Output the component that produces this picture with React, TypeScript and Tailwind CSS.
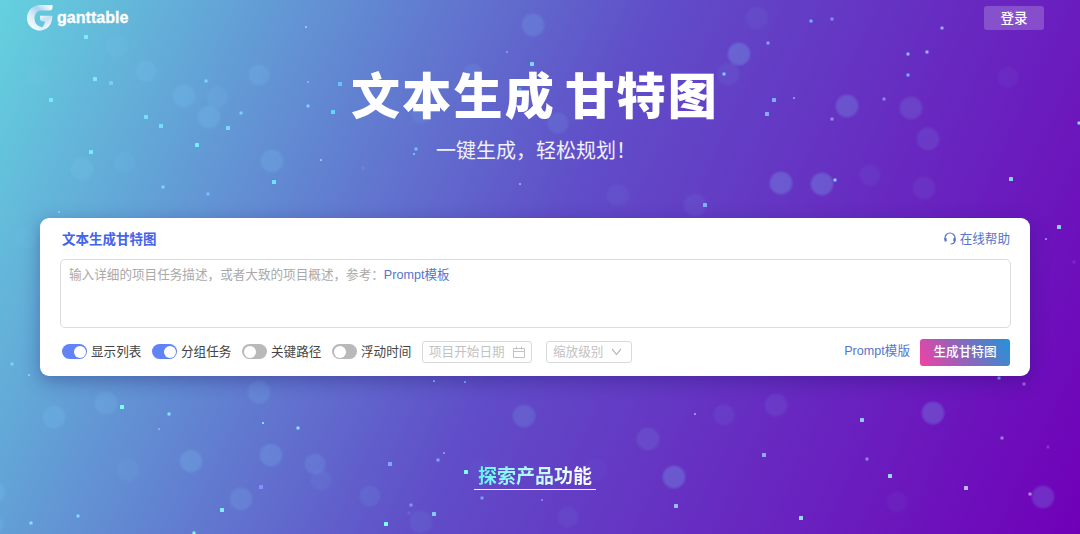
import React from "react";

// [x, y, radius, opacity]
const bubbles = [
  [117, 46, 12, 0.12], [146, 71, 11, 0.18], [37, 76, 11, 0.1], [184, 96, 12, 0.2], [217, 97, 11, 0.12],
  [209, 117, 12, 0.2], [259, 75, 11, 0.18], [82, 169, 12, 0.18], [125, 162, 11, 0.1], [272, 161, 12, 0.2],
  [533, 25, 12, 0.18], [473, 73, 10, 0.1], [421, 114, 10, 0.1], [558, 123, 11, 0.12], [739, 54, 12, 0.25],
  [757, 18, 12, 0.06], [728, 74, 12, 0.07], [781, 183, 12, 0.25], [822, 184, 12, 0.25], [847, 106, 12, 0.22],
  [911, 108, 12, 0.15], [928, 139, 12, 0.12], [870, 175, 11, 0.06], [924, 188, 12, 0.08], [1008, 77, 11, 0.05],
  [618, 195, 12, 0.06], [695, 205, 12, 0.08], [54, 417, 12, 0.2], [106, 403, 12, 0.17], [128, 470, 12, 0.08],
  [191, 461, 12, 0.22], [259, 392, 12, 0.16], [241, 499, 12, 0.17], [271, 455, 12, 0.2], [315, 464, 11, 0.15],
  [321, 480, 11, 0.07], [370, 496, 11, 0.1], [421, 522, 12, 0.08], [524, 416, 12, 0.17], [648, 439, 12, 0.13],
  [674, 477, 12, 0.25], [724, 415, 11, 0.08], [776, 405, 12, 0.1], [933, 413, 12, 0.24], [897, 502, 11, 0.05],
  [1043, 497, 12, 0.2], [568, 517, 11, 0.06], [596, 470, 12, 0.03], [480, 470, 12, 0.03], [-5, 492, 11, 0.2],
  [-6, 525, 10, 0.17], [26, 238, 11, 0.1],
];

// [x, y, size, color]
const sparks: [number, number, number, string][] = [
  [86, 37, 4, "#7feaff"], [95, 79, 4, "#77ecff"], [111, 83, 4, "#7cc9f6"], [51, 100, 4, "#75eaff"],
  [146, 117, 4, "#75dfff"], [161, 126, 4, "#75dcff"], [206, 81, 3, "#7ed1ff"], [241, 113, 3, "#7ccfff"],
  [228, 128, 4, "#7ad7ff"], [197, 145, 4, "#75edff"], [91, 152, 4, "#75eaff"], [163, 187, 3, "#79d6ff"],
  [208, 194, 3, "#7abfff"], [306, 27, 2, "#9cc6ff"], [308, 82, 2, "#8fb0ec"], [340, 84, 4, "#65c3fb"],
  [308, 106, 3, "#76d5ff"], [333, 112, 4, "#5ed8ff"], [416, 149, 3, "#75bfff"], [414, 154, 2, "#83bcff"],
  [321, 160, 2, "#9dc4ff"], [274, 182, 4, "#6be4ff"], [363, 168, 3, "#777ddd"], [520, 184, 2, "#a5a1f5"],
  [507, 52, 2, "#9096ef"], [532, 64, 4, "#78d6ff"], [520, 89, 3, "#519fee"], [768, 43, 3, "#82a5f5"],
  [724, 74, 3, "#7fc9ff"], [774, 100, 4, "#7eacff"], [794, 98, 2, "#929be7"], [767, 114, 4, "#88aaff"],
  [705, 205, 4, "#7cb2ff"], [811, 21, 3, "#70b9ff"], [832, 19, 3, "#858dee"], [942, 28, 3, "#91adff"],
  [927, 52, 3, "#98b4ff"], [908, 54, 3, "#8eb7ff"], [908, 75, 3, "#7ab0ff"], [884, 99, 3, "#8e86f0"],
  [832, 119, 3, "#978de5"], [835, 180, 3, "#7fd2f8"], [1011, 179, 4, "#86d5ff"], [1079, 123, 3, "#8bd8ff"],
  [1059, 227, 4, "#87d4fc"], [1046, 239, 2, "#9d8af1"], [1074, 262, 3, "#8424c0"], [12, 364, 3, "#72d5fb"],
  [29, 375, 2, "#86d4ff"], [59, 212, 2, "#86d4ff"], [122, 407, 4, "#7dffed"], [169, 414, 3, "#7de7ff"],
  [159, 429, 2, "#8bb0f2"], [263, 423, 2, "#86e7ff"], [78, 516, 3, "#80dcff"], [31, 523, 3, "#8addff"],
  [222, 510, 4, "#7defff"], [194, 533, 3, "#7bffdc"], [261, 487, 4, "#8c8cff"], [298, 428, 3, "#8ae6ff"],
  [434, 381, 2, "#73c0f5"], [465, 382, 2, "#72b6f3"], [390, 464, 4, "#7fa9ff"], [438, 460, 3, "#86a3ff"],
  [444, 453, 2, "#9392f0"], [466, 472, 4, "#78ffff"], [411, 505, 3, "#878eff"], [409, 513, 3, "#775bd4"],
  [434, 514, 4, "#80ccff"], [386, 524, 4, "#7dffe9"], [482, 498, 3, "#7c9df6"], [542, 500, 2, "#8586e2"],
  [695, 414, 2, "#a595ee"], [764, 455, 4, "#91a6fc"], [676, 506, 4, "#94c0ff"], [801, 518, 4, "#97dcff"],
  [862, 420, 4, "#91c9ff"], [867, 459, 3, "#9b81e9"], [890, 476, 4, "#9bd8ff"], [966, 488, 4, "#c1b7ff"],
  [1002, 438, 3, "#a079dd"], [1030, 494, 3, "#b587e7"], [1048, 447, 3, "#8b2ccc"], [999, 378, 3, "#79a9df"],
  [1024, 384, 3, "#a563e0"],
];

const Backdrop = () => (
  <svg className="absolute inset-0 h-full w-full" viewBox="0 0 1080 534" aria-hidden="true">
    <defs>
      <radialGradient id="bubble">
        <stop offset="0.75" stopColor="#7cc8f4" />
        <stop offset="1" stopColor="#7cc8f4" stopOpacity="0.15" />
      </radialGradient>
    </defs>
    {bubbles.map(([x, y, r, o], i) => (
      <circle key={i} cx={x} cy={y} r={r + 0.5} fill="url(#bubble)" opacity={o} />
    ))}
    {sparks.map(([x, y, s, c], i) => (
      <rect key={i} x={x - s / 2} y={y - s / 2} width={s} height={s} rx="0.6" fill={c} />
    ))}
  </svg>
);

const Logo = () => (
  <div className="flex items-center gap-1">
    <svg width="26" height="26" viewBox="0 0 26 26">
      <defs>
        <linearGradient id="arc" x1="1" y1="0.1" x2="0.2" y2="1">
          <stop offset="0" stopColor="#fff" />
          <stop offset="0.35" stopColor="#a9d3ef" />
          <stop offset="0.6" stopColor="#d5e9f8" />
          <stop offset="1" stopColor="#fff" />
        </linearGradient>
        <linearGradient id="hook" x1="0" y1="0" x2="0.6" y2="1">
          <stop offset="0" stopColor="#fff" />
          <stop offset="0.4" stopColor="#c6def4" />
          <stop offset="1" stopColor="#fff" />
        </linearGradient>
      </defs>
      <path d="M25.500 0v2.500Q25.500 5.500 22.500 5.500H15C10 5.500 7.500 9 7.500 13.500c0 5 3.500 8 7.500 8.500-.5 2.500-2.500 3.700-5 3.200C4 23.500 0 19 0 13.200 0 5.500 5.500 0 13.500 0Z" fill="url(#arc)" />
      <path d="M13 10.700h12.300c.3 8.500-4.500 15-14.800 15 4-1.500 7-5 7.500-9.200H16.500q-3.500 0-3.500-3Z" fill="url(#hook)" />
    </svg>
    <span className="font-['Liberation_Sans',sans-serif] text-[16px] leading-6 font-bold tracking-[0.05px] text-white [-webkit-text-stroke:0.3px_white]">ganttable</span>
  </div>
);

const Toggle = ({ label, on }: { label: string; on?: boolean }) => (
  <div className="flex w-[90px] items-center gap-1">
    <span className={`flex h-[15px] w-[25px] shrink-0 items-center rounded-full p-[1.5px] ${on ? "justify-end bg-[#6183f5]" : "bg-[#b9b9b9]"}`}>
      <span className="h-3 w-3 rounded-full bg-white" />
    </span>
    <span className="pb-px text-[12.6px] whitespace-nowrap text-[#444]">{label}</span>
  </div>
);

const HeadsetIcon = () => (
  <svg width="12" height="13" viewBox="0 0 12 13" fill="none" stroke="#5874ca" strokeWidth="1.2">
    <path d="M1 8V6a5 5 0 0 1 10 0v2c0 2.500-1.500 4-4.500 4" />
    <path d="M1.200 6v3.500M2 6.300v3M10.800 6v3.500M10 6.300v3" strokeWidth="1.4" />
  </svg>
);

const CalendarIcon = () => (
  <svg width="12" height="12" viewBox="0 0 12 12" fill="none" stroke="#c2c2c2">
    <path d="M.5 2.500h11v9H.5zM.5 5.500h11M3.500.5v3M8.500.5v3" />
  </svg>
);

const App = () => {
  return (
    <div className="relative h-[534px] w-[1080px] overflow-hidden bg-[linear-gradient(115deg,#64d1de_0%,#604dc8_50%,#7000b8_100%)] font-['Noto_Sans_CJK_SC',sans-serif]">
      <Backdrop />
      <div className="relative flex h-full flex-col">
        <header className="flex h-9 w-full items-center justify-between pr-9 pl-[27px]">
          <Logo />
          <button className="h-6 w-[60px] rounded-[3px] bg-white/20 pb-0.5 text-[13.5px] leading-[22px] font-medium text-white">登录</button>
        </header>
        <main className="flex w-[1070px] flex-col items-center">
          <h1 className="mt-[21px] h-[72px] text-[49px] leading-[72px] font-black tracking-[2.3px] whitespace-pre text-white [word-spacing:-4.5px]">文本生成 甘特图</h1>
          <p className="mt-[5px] ml-0.5 h-8 text-[20px] leading-8 text-[#f1f0fb]">一键生成，轻松规划！</p>

          <section className="mt-[52px] flex h-[158px] w-[990px] flex-col rounded-[9px] bg-white px-5 shadow-[0_5px_18px_rgba(30,20,100,0.35)]">
            <div className="flex h-[41px] items-center justify-between pl-0.5">
              <h2 className="text-[13.5px] font-bold text-[#4263eb]">文本生成甘特图</h2>
              <a className="flex items-center gap-1 text-[12.6px] text-[#5874ca]">
                <HeadsetIcon />
                在线帮助
              </a>
            </div>
            <div className="h-[69px] w-[951px] rounded-[5px] border border-[#dcdcdc] px-2 py-[3px] text-[12.6px] leading-[22px] text-[#a9a9a9]">
              输入详细的项目任务描述，或者大致的项目概述，参考：
              <a className="font-['Liberation_Sans','Noto_Sans_CJK_SC',sans-serif] text-[#5874ca]">Prompt模板</a>
            </div>
            <div className="flex h-12 items-center pl-0.5">
              <Toggle label="显示列表" on />
              <Toggle label="分组任务" on />
              <Toggle label="关键路径" />
              <Toggle label="浮动时间" />
              <div className="flex h-[22px] w-[110px] items-center justify-between rounded-[3px] border border-[#d9d9d9] px-1.5 text-[12.6px] text-[#c2c2c2]">
                <span className="pb-px">项目开始日期</span>
                <CalendarIcon />
              </div>
              <div className="ml-[14px] flex h-[22px] w-[86px] items-center justify-between rounded-[3px] border border-[#d9d9d9] pr-[9px] pl-1.5 text-[12.6px] text-[#c2c2c2]">
                <span className="pb-px">缩放级别</span>
                <svg width="11" height="8" viewBox="0 0 11 8" fill="none" stroke="#b5b5b5" strokeWidth="1.1">
                  <path d="m1 .8 4.500 5.900L10 .8" />
                </svg>
              </div>
              <a className="ml-auto pb-px font-['Liberation_Sans','Noto_Sans_CJK_SC',sans-serif] text-[12.6px] text-[#5874ca]">Prompt模版</a>
              <button className="ml-2.5 h-[27px] w-[90px] rounded-[3px] bg-[linear-gradient(60deg,#f241a5_0%,#9463b8_45%,#2194d8_100%)] pb-px text-[12.6px] font-medium text-white">
                生成甘特图
              </button>
            </div>
          </section>

          <a className="mt-[84px] flex h-[30px] w-[122px] justify-center border-b border-[#f3eafa]">
            <span className="bg-linear-to-r from-[#5bf3f3] to-white bg-clip-text text-[19px] leading-[30px] font-bold text-transparent">探索产品功能</span>
          </a>
        </main>
      </div>
    </div>
  );
};

export default App;
